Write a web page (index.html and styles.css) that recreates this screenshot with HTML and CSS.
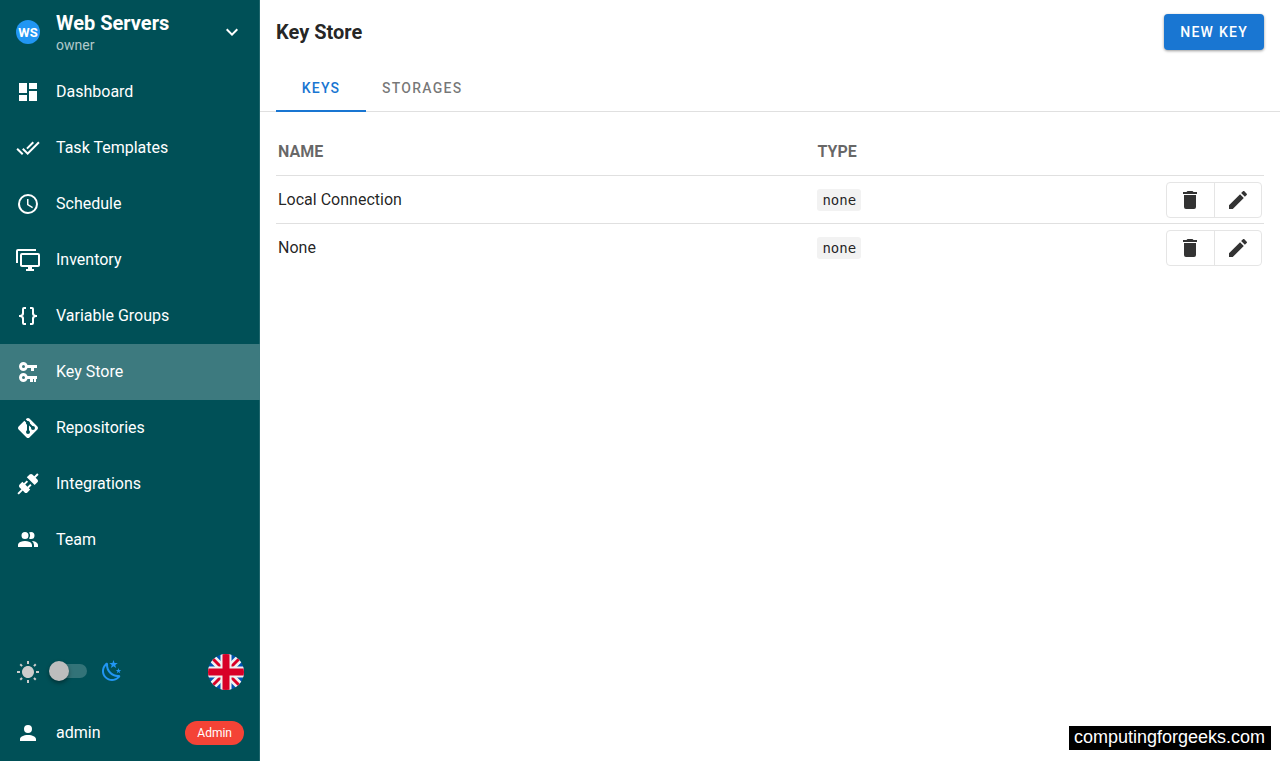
FILE: index.html
```html
<!DOCTYPE html>
<html lang="en">
<head>
    <meta charset="UTF-8">
    <meta name="viewport" content="width=device-width, initial-scale=1.0">
    <title>Key Store</title>
    <link rel="stylesheet" href="styles.css">
</head>
<body>
    <aside class="sidebar">
        <button type="button" class="project">
            <span class="avatar">WS</span>
            <span class="project-text">
                <span class="project-name">Web Servers</span>
                <span class="project-role">owner</span>
            </span>
            <svg class="icon" viewBox="0 0 24 24"><path d="M7.41,8.58L12,13.17L16.59,8.58L18,10L12,16L6,10L7.41,8.58Z"/></svg>
        </button>

        <nav class="menu">
            <a href="#dashboard" class="menu-item">
                <svg class="icon" viewBox="0 0 24 24"><path d="M13,3V9H21V3M13,21H21V11H13M3,21H11V15H3M3,13H11V3H3V13Z"/></svg>
                Dashboard
            </a>
            <a href="#templates" class="menu-item">
                <svg class="icon" viewBox="0 0 24 24"><path d="M0.41,13.41L6,19L7.41,17.58L1.83,12M22.24,5.58L11.66,16.17L7.5,12L6.07,13.41L11.66,19L23.66,7M18,7L16.59,5.58L10.24,11.93L11.66,13.34L18,7Z"/></svg>
                Task Templates
            </a>
            <a href="#schedule" class="menu-item">
                <svg class="icon" viewBox="0 0 24 24"><path d="M12,20A8,8 0 0,0 20,12A8,8 0 0,0 12,4A8,8 0 0,0 4,12A8,8 0 0,0 12,20M12,2A10,10 0 0,1 22,12A10,10 0 0,1 12,22C6.47,22 2,17.5 2,12A10,10 0 0,1 12,2M12.5,7V12.25L17,14.92L16.25,16.15L11,13V7H12.5Z"/></svg>
                Schedule
            </a>
            <a href="#inventory" class="menu-item">
                <svg class="icon" viewBox="0 0 24 24"><path d="M22,17V7H6V17H22M22,5A2,2 0 0,1 24,7V17C24,18.11 23.1,19 22,19H16V21H18V23H10V21H12V19H6C4.89,19 4,18.11 4,17V7A2,2 0 0,1 6,5H22M2,3V15H0V3A2,2 0 0,1 2,1H20V3H2Z"/></svg>
                Inventory
            </a>
            <a href="#environment" class="menu-item">
                <svg class="icon" viewBox="0 0 24 24"><path d="M8,3A2,2 0 0,0 6,5V9A2,2 0 0,1 4,11H3V13H4A2,2 0 0,1 6,15V19A2,2 0 0,0 8,21H10V19H8V14A2,2 0 0,0 6,12A2,2 0 0,0 8,10V5H10V3M16,3A2,2 0 0,1 18,5V9A2,2 0 0,0 20,11H21V13H20A2,2 0 0,0 18,15V19A2,2 0 0,1 16,21H14V19H16V14A2,2 0 0,1 18,12A2,2 0 0,1 16,10V5H14V3H16Z"/></svg>
                Variable Groups
            </a>
            <a href="#keys" class="menu-item active">
                <svg class="icon" viewBox="0 0 24 24"><path fill-rule="evenodd" d="M7.5,2C9.2,2 10.8,3.2 11.5,5H21V8H18V11H15V8H11.5C10.8,9.8 9.2,11 7.5,11C5,11 3,9 3,6.5C3,4 5,2 7.5,2M7.5,5A1.5,1.5 0 0,0 6,6.5A1.5,1.5 0 0,0 7.5,8A1.5,1.5 0 0,0 9,6.5A1.5,1.5 0 0,0 7.5,5M7.5,13C9.2,13 10.8,14.2 11.5,16H21V19H20V22H18V19H17V22H14V19H11.5C10.8,20.8 9.2,22 7.5,22C5,22 3,20 3,17.5C3,15 5,13 7.5,13M7.5,16A1.5,1.5 0 0,0 6,17.5A1.5,1.5 0 0,0 7.5,19A1.5,1.5 0 0,0 9,17.5A1.5,1.5 0 0,0 7.5,16Z"/></svg>
                Key Store
            </a>
            <a href="#repositories" class="menu-item">
                <svg class="icon" viewBox="0 0 24 24"><path d="M2.6,10.59L8.38,4.8L10.07,6.5C9.83,7.35 10.22,8.28 11,8.73V14.27C10.4,14.61 10,15.26 10,16A2,2 0 0,0 12,18A2,2 0 0,0 14,16C14,15.26 13.6,14.61 13,14.27V9.41L15.07,11.5C15,11.65 15,11.82 15,12A2,2 0 0,0 17,14A2,2 0 0,0 19,12A2,2 0 0,0 17,10C16.82,10 16.65,10 16.5,10.07L13.93,7.5C14.19,6.57 13.71,5.55 12.78,5.16C12.35,5 11.9,4.96 11.5,5.07L9.8,3.38L10.59,2.6C11.37,1.81 12.63,1.81 13.41,2.6L21.4,10.59C22.19,11.37 22.19,12.63 21.4,13.41L13.41,21.4C12.63,22.19 11.37,22.19 10.59,21.4L2.6,13.41C1.81,12.63 1.81,11.37 2.6,10.59Z"/></svg>
                Repositories
            </a>
            <a href="#integrations" class="menu-item">
                <svg class="icon" viewBox="0 0 24 24"><path d="M21.4 7.5C22.2 8.3 22.2 9.6 21.4 10.3L18.6 13.1L10.8 5.3L13.6 2.5C14.4 1.7 15.7 1.7 16.4 2.5L18.2 4.3L21.2 1.3L22.6 2.7L19.6 5.7L21.4 7.5M15.6 13.3L14.2 11.9L11.4 14.7L9.3 12.6L12.1 9.8L10.7 8.4L7.9 11.2L6.4 9.8L3.6 12.6C2.8 13.4 2.8 14.7 3.6 15.4L5.4 17.2L1.4 21.2L2.8 22.6L6.8 18.6L8.6 20.4C9.4 21.2 10.7 21.2 11.4 20.4L14.2 17.6L12.8 16.2L15.6 13.3Z"/></svg>
                Integrations
            </a>
            <a href="#team" class="menu-item">
                <svg class="icon" viewBox="0 0 24 24"><path d="M16 17V19H2V17S2 13 9 13 16 17 16 17M12.5 7.5A3.5 3.5 0 1 0 9 11A3.5 3.5 0 0 0 12.5 7.5M15.94 13A5.32 5.32 0 0 1 18 17V19H22V17S22 13.37 15.94 13M15 4A3.39 3.39 0 0 0 13.07 4.59A5 5 0 0 1 13.07 10.41A3.39 3.39 0 0 0 15 11A3.5 3.5 0 0 0 15 4Z"/></svg>
                Team
            </a>
        </nav>

        <div class="preferences">
            <svg class="icon sun" viewBox="0 0 24 24"><path d="M3.55 19.09L4.96 20.5L6.76 18.71L5.34 17.29M12 6C8.69 6 6 8.69 6 12S8.69 18 12 18 18 15.31 18 12C18 8.68 15.31 6 12 6M20 13H23V11H20M17.24 18.71L19.04 20.5L20.45 19.09L18.66 17.29M20.45 5L19.04 3.6L17.24 5.39L18.66 6.81M13 1H11V4H13M6.76 5.39L4.96 3.6L3.55 5L5.34 6.81L6.76 5.39M1 13H4V11H1M13 20H11V23H13"/></svg>
            <input type="checkbox" class="switch" id="darkMode" aria-label="Dark mode">
            <label for="darkMode" class="moon">
                <svg class="icon" viewBox="0 0 24 24"><path d="M17.75,4.09L15.22,6.03L16.13,9.09L13.5,7.28L10.87,9.09L11.78,6.03L9.25,4.09L12.44,4L13.5,1L14.56,4L17.75,4.09M21.25,11L19.61,12.25L20.2,14.23L18.5,13.06L16.8,14.23L17.39,12.25L15.75,11L17.81,10.95L18.5,9L19.19,10.95L21.25,11M18.97,15.95C19.8,15.87 20.69,17.05 20.16,17.8C19.84,18.25 19.5,18.67 19.08,19.07C15.17,23 8.84,23 4.94,19.07C1.03,15.17 1.03,8.83 4.94,4.93C5.34,4.53 5.76,4.17 6.21,3.85C6.96,3.32 8.14,4.21 8.06,5.04C7.79,7.9 8.75,10.87 10.95,13.06C13.14,15.26 16.1,16.22 18.97,15.95M17.33,17.97C14.5,17.81 11.7,16.64 9.53,14.5C7.36,12.31 6.2,9.5 6.04,6.68C3.23,9.82 3.34,14.64 6.35,17.66C9.37,20.67 14.19,20.78 17.33,17.97Z"/></svg>
            </label>
            <button type="button" class="language" aria-label="Language">
                <svg class="flag" viewBox="0 0 36 36">
                    <rect width="36" height="36" fill="#0052b4"/>
                    <path d="M0 0L36 36M36 0L0 36" stroke="#f0f0f0" stroke-width="8"/>
                    <path d="M0 0L36 36M36 0L0 36" stroke="#d80027" stroke-width="3"/>
                    <path d="M18 0V36M0 18H36" stroke="#f0f0f0" stroke-width="11"/>
                    <path d="M18 0V36M0 18H36" stroke="#d80027" stroke-width="7"/>
                </svg>
            </button>
        </div>

        <a href="#user" class="menu-item">
            <svg class="icon" viewBox="0 0 24 24"><path d="M12,4A4,4 0 0,1 16,8A4,4 0 0,1 12,12A4,4 0 0,1 8,8A4,4 0 0,1 12,4M12,14C16.42,14 20,15.79 20,18V20H4V18C4,15.79 7.58,14 12,14Z"/></svg>
            admin
            <span class="chip">Admin</span>
        </a>
    </aside>

    <main class="content">
        <header class="toolbar">
            <h1>Key Store</h1>
            <button type="button" class="new-key">New Key</button>
        </header>

        <div class="tabs" role="tablist">
            <button type="button" class="tab selected" role="tab" aria-selected="true">Keys</button>
            <button type="button" class="tab" role="tab" aria-selected="false">Storages</button>
        </div>

        <div class="table-wrap">
            <table class="keys">
                <thead>
                    <tr>
                        <th class="col-name">Name</th>
                        <th>Type</th>
                        <th class="col-actions"></th>
                    </tr>
                </thead>
                <tbody>
                    <tr>
                        <td>Local Connection</td>
                        <td><code>none</code></td>
                        <td>
                            <div class="actions">
                                <button type="button" aria-label="Delete"><svg class="icon" viewBox="0 0 24 24"><path d="M19,4H15.5L14.5,3H9.5L8.5,4H5V6H19M6,19A2,2 0 0,0 8,21H16A2,2 0 0,0 18,19V7H6V19Z"/></svg></button>
                                <button type="button" aria-label="Edit"><svg class="icon" viewBox="0 0 24 24"><path d="M20.71,7.04C21.1,6.65 21.1,6 20.71,5.63L18.37,3.29C18,2.9 17.35,2.9 16.96,3.29L15.12,5.12L18.87,8.87M3,17.25V21H6.75L17.81,9.93L14.06,6.18L3,17.25Z"/></svg></button>
                            </div>
                        </td>
                    </tr>
                    <tr>
                        <td>None</td>
                        <td><code>none</code></td>
                        <td>
                            <div class="actions">
                                <button type="button" aria-label="Delete"><svg class="icon" viewBox="0 0 24 24"><path d="M19,4H15.5L14.5,3H9.5L8.5,4H5V6H19M6,19A2,2 0 0,0 8,21H16A2,2 0 0,0 18,19V7H6V19Z"/></svg></button>
                                <button type="button" aria-label="Edit"><svg class="icon" viewBox="0 0 24 24"><path d="M20.71,7.04C21.1,6.65 21.1,6 20.71,5.63L18.37,3.29C18,2.9 17.35,2.9 16.96,3.29L15.12,5.12L18.87,8.87M3,17.25V21H6.75L17.81,9.93L14.06,6.18L3,17.25Z"/></svg></button>
                            </div>
                        </td>
                    </tr>
                </tbody>
            </table>
        </div>
    </main>

    <div class="watermark">computingforgeeks.com</div>
</body>
</html>
```
FILE: styles.css
```css
* {
    box-sizing: border-box;
}

body {
    margin: 0;
    display: flex;
    min-height: 100vh;
    font-family: Roboto, sans-serif;
    font-size: 16px;
    line-height: 24px;
    color: rgba(0, 0, 0, 0.87);
    background-color: #fff;
}

button {
    font-family: inherit;
    cursor: pointer;
}

.icon {
    display: block;
    flex: none;
    width: 24px;
    height: 24px;
    fill: currentColor;
}

/* Sidebar */
.sidebar {
    display: flex;
    flex-direction: column;
    flex: none;
    width: 260px;
    background-color: #005057;
    box-shadow: inset -1px 0 #1f666c;
    color: #fff;
}

.project {
    display: flex;
    align-items: center;
    gap: 16px;
    height: 64px;
    padding: 0 16px;
    border: none;
    background: none;
    color: #fff;
    text-align: left;
}

.avatar {
    display: flex;
    align-items: center;
    justify-content: center;
    flex: none;
    width: 24px;
    height: 24px;
    border-radius: 50%;
    background-color: #2196f3;
    font-size: 13px;
    font-weight: bold;
}

.project-text {
    display: flex;
    flex-direction: column;
    flex: 1;
    padding-top: 2px;
}

.project-name {
    font-size: 20px;
    font-weight: bold;
    line-height: 24px;
}

.project-role {
    font-size: 14px;
    line-height: 20px;
    color: rgba(255, 255, 255, 0.7);
}

.menu {
    flex: 1;
}

.menu-item {
    display: flex;
    align-items: center;
    gap: 16px;
    height: 56px;
    padding: 0 16px;
    color: #fff;
    text-decoration: none;
}

.menu-item.active {
    background-color: #3d7a7f;
}

.preferences {
    display: flex;
    align-items: center;
    height: 56px;
    margin-bottom: 5px;
    padding: 0 16px;
}

.sun {
    color: #ccc;
}

.switch {
    appearance: none;
    position: relative;
    width: 36px;
    height: 14px;
    margin: 0 13px 2px 11px;
    border-radius: 7px;
    background-color: rgba(255, 255, 255, 0.2);
    cursor: pointer;
}

.switch::before {
    content: "";
    position: absolute;
    top: -3px;
    left: -2px;
    width: 20px;
    height: 20px;
    border-radius: 50%;
    background-color: #bdbdbd;
    box-shadow: 0 2px 4px rgba(0, 0, 0, 0.4);
}

.switch:checked::before {
    left: 18px;
}

.moon {
    margin-bottom: 3px;
    color: #2196f3;
    cursor: pointer;
}

.language {
    margin-left: auto;
    padding: 0;
    border: none;
    background: none;
}

.flag {
    display: block;
    width: 36px;
    height: 36px;
    border-radius: 50%;
}

.chip {
    margin-left: auto;
    padding: 0 12px;
    border-radius: 12px;
    background-color: #f44336;
    font-size: 12px;
    line-height: 24px;
}

/* Content */
.content {
    flex: 1;
    min-width: 0;
}

.toolbar {
    display: flex;
    align-items: center;
    justify-content: space-between;
    height: 64px;
    padding: 0 16px;
}

h1 {
    margin: 0;
    font-size: 20px;
    font-weight: bold;
}

.new-key {
    height: 36px;
    padding: 0 16px;
    border: none;
    border-radius: 4px;
    background-color: #1976d2;
    color: #fff;
    font-size: 14px;
    font-weight: 500;
    letter-spacing: 0.09em;
    text-transform: uppercase;
    box-shadow: 0 1px 3px rgba(0, 0, 0, 0.4);
}

.tabs {
    display: flex;
    height: 48px;
    padding: 0 16px;
    box-shadow: inset 0 -1px #e0e0e0;
}

.tab {
    min-width: 90px;
    padding: 2px 16px 0;
    border: none;
    border-bottom: 2px solid transparent;
    background: none;
    color: rgba(0, 0, 0, 0.54);
    font-size: 14px;
    font-weight: 500;
    letter-spacing: 0.09em;
    text-transform: uppercase;
}

.tab.selected {
    border-bottom-color: #1976d2;
    color: #1976d2;
}

.table-wrap {
    padding: 16px;
}

.keys {
    width: 100%;
    border-spacing: 0;
}

.keys th,
.keys td {
    height: 48px;
    padding: 0 2px;
    border-bottom: 1px solid #e0e0e0;
    text-align: left;
}

.keys th {
    color: rgba(0, 0, 0, 0.6);
    text-transform: uppercase;
}

.keys td {
    padding-top: 1px;
}

.keys tr:last-child td {
    border-bottom-color: transparent;
}

.col-name {
    width: 54.6%;
}

.col-actions {
    width: 100px;
}

code {
    padding: 3px 5px;
    border-radius: 3px;
    background-color: #f2f2f2;
    font-family: "DejaVu Sans Mono", monospace;
    font-size: 14px;
}

.actions {
    display: flex;
    width: 96px;
    height: 36px;
    border: 1px solid #e5e5e5;
    border-radius: 4px;
}

.actions button {
    display: flex;
    align-items: center;
    justify-content: center;
    flex: 1;
    padding: 0;
    border: none;
    background: none;
    color: #333;
}

.actions button:first-child {
    border-right: 1px solid #e5e5e5;
}

.watermark {
    position: fixed;
    right: 9px;
    bottom: 11px;
    padding: 0 6px 2px 5px;
    background-color: #000;
    color: #fff;
    font-family: "Liberation Sans", Arial, sans-serif;
    font-size: 18px;
    line-height: 22px;
}
```
